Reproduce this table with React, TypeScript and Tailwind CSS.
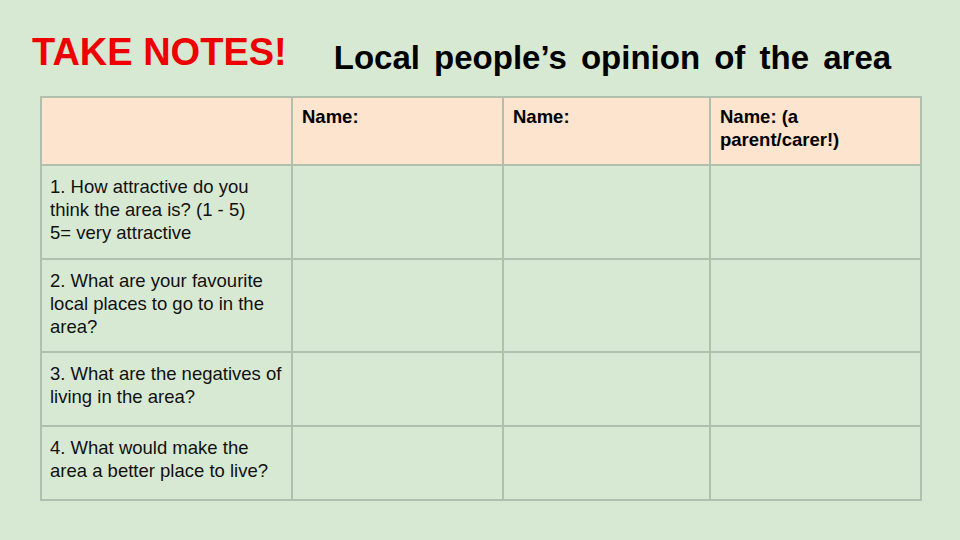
import React from "react";

const font = { fontFamily: '"Liberation Sans", Arial, sans-serif' };

const rows: { h: string; lines: string[] }[] = [
  { h: "h-[94px]", lines: ["1. How attractive do you", "think the area is? (1 - 5)", "5= very attractive"] },
  { h: "h-[93px]", lines: ["2. What are your favourite", "local places to go to in the", "area?"] },
  { h: "h-[74px]", lines: ["3. What are the negatives of", "living in the area?"] },
  { h: "h-[74px]", lines: ["4. What would make the", "area a better place to live?"] },
];

const cols = ["w-[251px]", "w-[211px]", "w-[207px]", "w-[211px]"];

export default function App() {
  return (
    <div
      className="w-[960px] h-[540px] bg-[#d8e9d3] overflow-hidden text-black"
      style={font}
    >
      <div className="flex h-[96px] items-start">
        <div className="ml-[32px] mt-[33px] text-[38px] leading-none font-bold text-[#ee0000] whitespace-nowrap">
          TAKE NOTES!
        </div>
        <div className="ml-[47px] mt-[41px] text-[33px] leading-none font-bold whitespace-nowrap [word-spacing:5px]">
          Local people’s opinion of the area
        </div>
      </div>
      <div className="ml-[40px] w-[882px] border-l-2 border-t-2 border-[#b1bfae]">
        <div className="flex h-[68px] bg-[#fce4ce]">
          {cols.map((c, i) => (
            <div
              key={i}
              className={`${c} shrink-0 border-r-2 border-b-2 border-[#b1bfae] pl-[9px] pt-[7px] text-[18.5px] leading-[23px] font-bold`}
            >
              {i === 0 ? null : i === 3 ? (
                <>
                  Name: (a
                  <br />
                  parent/carer!)
                </>
              ) : (
                "Name:"
              )}
            </div>
          ))}
        </div>
        {rows.map((r, ri) => (
          <div key={ri} className={`flex ${r.h}`}>
            {cols.map((c, i) => (
              <div
                key={i}
                className={`${c} shrink-0 border-r-2 border-b-2 border-[#b1bfae] pl-[8px] pt-[9px] text-[18.5px] leading-[23px] text-[#111]`}
              >
                {i === 0
                  ? r.lines.map((l, li) => (
                      <div key={li} className="whitespace-nowrap">
                        {l}
                      </div>
                    ))
                  : null}
              </div>
            ))}
          </div>
        ))}
      </div>
    </div>
  );
}
